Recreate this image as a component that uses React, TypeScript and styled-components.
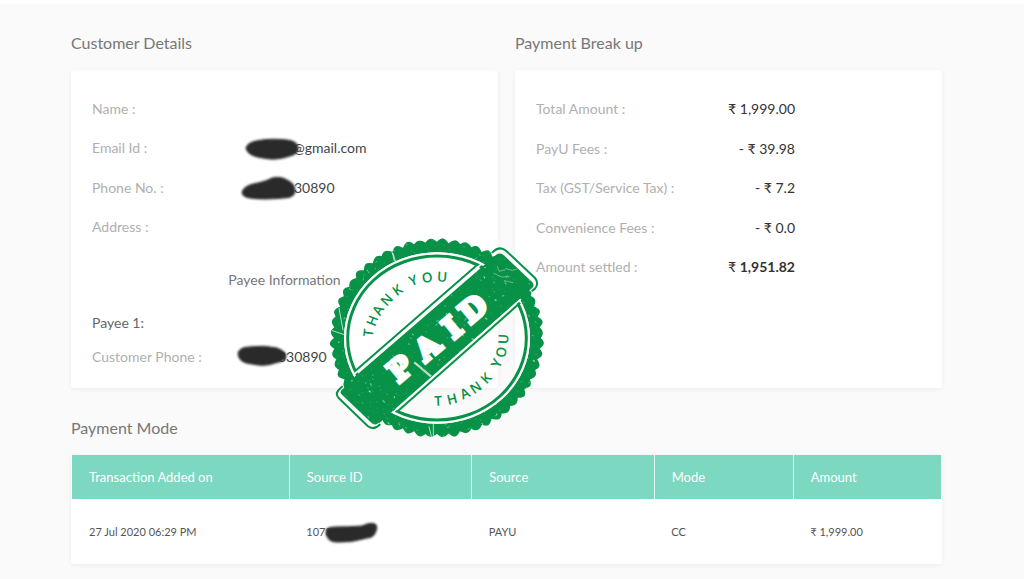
import React from "react";
import styled, { createGlobalStyle } from "styled-components";

const GlobalStyle = createGlobalStyle`
  * { box-sizing: border-box; }
  html { background: #fafafa; }
  body {
    margin: 0;
    background: #fafafa;
    font-family: Lato, "Liberation Sans", sans-serif;
    color: #444;
  }
`;

const Page = styled.main`
  border-top: 4px solid #fff;
  padding: 27px 82px 14px 71px;
`;

const Columns = styled.div`
  position: relative;
  display: grid;
  grid-template-columns: 1fr 1fr;
  gap: 17px;
`;

const Section = styled.section`
  display: flex;
  flex-direction: column;
`;

const Heading = styled.h2`
  margin: 0 0 15px;
  font-size: 16px;
  line-height: 24px;
  font-weight: 400;
  color: #777;
`;

const Card = styled.div`
  flex: 1;
  padding: 29px 21px 21px;
  background: #fff;
  border-radius: 3px;
  box-shadow: 0 1px 5px rgba(0, 0, 0, 0.06);
`;

const Details = styled.dl<{ $rows: number }>`
  display: grid;
  align-content: space-between;
  min-height: ${(p) => p.$rows * 20 + (p.$rows - 1) * 20 - 2}px;
  margin: 0;
  font-size: 14px;
  line-height: 20px;
`;

const Row = styled.div<{ $label: number }>`
  display: grid;
  grid-template-columns: ${(p) => p.$label}px 1fr;
`;

const Label = styled.dt`
  color: #b0b0b0;
`;

const Value = styled.dd`
  display: flex;
  margin: 0;
  color: #444;
`;

const Money = styled.dd<{ $bold?: boolean }>`
  width: 83px;
  margin: 0;
  text-align: right;
  white-space: nowrap;
  color: #333;
  font-weight: 400;

  b {
    font-weight: ${(p) => (p.$bold ? 700 : 400)};
  }
`;

const Subheading = styled.h3`
  margin: 33px 0 23px;
  font-size: 14px;
  line-height: 20px;
  font-weight: 400;
  text-align: center;
  color: #777;
`;

const PayeeTitle = styled.h4`
  margin: 0 0 14px;
  font-size: 14px;
  line-height: 20px;
  font-weight: 400;
  color: #666;
`;

const BlotSvg = styled.svg<{ $lead: number; $overlap: number }>`
  position: relative;
  flex: none;
  margin: -4px -${(p) => p.$overlap}px -4px -${(p) => p.$lead}px;
  z-index: 1;
`;

const ModeSection = styled.section`
  margin-top: 28px;
`;

const TableCard = styled.div`
  background: #fff;
  padding: 0 1px;
  border-radius: 3px;
  box-shadow: 0 1px 5px rgba(0, 0, 0, 0.06);
`;

const Table = styled.table`
  width: 100%;
  table-layout: fixed;
  border-collapse: collapse;
`;

const Th = styled.th<{ $width: number }>`
  width: ${(p) => p.$width}%;
  height: 44px;
  padding: 0 17px;
  background: #7cd8c0;
  color: #fff;
  font-size: 13px;
  font-weight: 400;
  text-align: left;

  & + & {
    border-left: 1px solid #e6f8f3;
  }
`;

const Td = styled.td`
  height: 65px;
  padding: 0 17px;
  font-size: 11px;
  line-height: 20px;
  color: #555;
`;

const Inline = styled.span`
  display: flex;
`;

const StampSvg = styled.svg`
  position: absolute;
  top: 199px;
  left: calc(50% - 188px);
  z-index: 2;
  pointer-events: none;
`;

const blots = {
  email: { width: 66, lead: 0, overlap: 9, d: "M10 14Q11 9 20 7Q34 4 51 6Q61 7 62 13Q63 20 54 22Q40 27 27 24Q11 22 10 14Z" },
  phone: { width: 66, lead: 0, overlap: 8, d: "M6 18Q8 11 22 9Q31 7 36 4Q45 2 51 6Q60 10 59 18Q58 24 47 24Q27 26 14 24Q6 23 6 18Z" },
  payee: { width: 62, lead: 0, overlap: 20, d: "M2 10Q4 4 13 4Q28 2 41 5Q51 9 50 14Q49 18 39 20Q29 24 16 21Q2 20 2 10Z" },
  source: { width: 60, lead: 8, overlap: 0, d: "M2 13Q3 9 11 9Q25 9 38 8Q46 4 51 6Q54 8 52 13Q50 20 43 20Q28 25 11 24Q2 23 2 13Z" },
};

function Blot({ kind }: { kind: keyof typeof blots }) {
  const b = blots[kind];
  return (
    <BlotSvg
      $lead={b.lead}
      $overlap={b.overlap}
      width={b.width}
      height="28"
      viewBox={`0 0 ${b.width} 28`}
      aria-hidden="true"
    >
      <defs>
        <filter id={`soft-${kind}`} x="-10%" y="-20%" width="120%" height="140%">
          <feGaussianBlur stdDeviation="0.9" />
        </filter>
      </defs>
      <path d={b.d} fill="#2b2b2b" stroke="#2b2b2b" filter={`url(#soft-${kind})`} />
    </BlotSvg>
  );
}

const GREEN = "#079247";
const CX = 354;
const CY = 324;

function scallop(count: number, rx: number, ry: number, depth: number) {
  const samples = count * 8;
  const points = Array.from({ length: samples }, (_, i) => {
    const angle = (i / samples) * Math.PI * 2;
    const wave = Math.abs(Math.sin((angle * count) / 2)) * 2 - 1;
    const uneven = Math.sin(angle * 23) * 1.2 + Math.sin(angle * 41 + 1);
    const d = wave * depth + uneven;
    return `${(CX + (rx + d) * Math.cos(angle)).toFixed(1)} ${(CY + (ry + d) * Math.sin(angle)).toFixed(1)}`;
  });
  return `M${points.join("L")}Z`;
}

const RING =
  scallop(56, 315, 293, 5) +
  `M${CX - 279} ${CY}a279 257 0 1 0 558 0a279 257 0 1 0 -558 0Z`;

const BANNER = "M98 448L527 78Q542 64 556 77L640 157Q648 166 639 175L215 549L184 577Q170 590 157 578L69 494Q60 486 70 476Z";

function makeSpecks(count: number, start: number) {
  let seed = start;
  const next = () => {
    seed = (seed * 16807) % 2147483647;
    return seed / 2147483647;
  };
  return Array.from({ length: count }, () => {
    const x = 30 + next() * 650;
    const y = 20 + next() * 610;
    const size = 0.8 + Math.pow(next(), 3) * 3;
    const dx = (next() - 0.5) * size * 3;
    const dy = (next() - 0.5) * size * 3;
    return { d: `M${x.toFixed(1)} ${y.toFixed(1)}l${dx.toFixed(1)} ${dy.toFixed(1)}`, size, opacity: 0.2 + next() * 0.5 };
  });
}

const specks = makeSpecks(950, 4711);
const grains = makeSpecks(900, 911);

type Glyph = { x: number; y: number; turn: number; advance: number };

function StampWord({ word, glyphs, size, cap, ...rest }: {
  word: string;
  glyphs: Glyph[];
  size: number;
  cap: number;
} & React.SVGProps<SVGTextElement>) {
  const placed = glyphs.map((g) => {
    const a = (g.turn * Math.PI) / 180;
    const half = (g.advance * size) / 2;
    const rise = (cap * size) / 2;
    return {
      x: g.x - half * Math.cos(a) - rise * Math.sin(a),
      y: g.y - half * Math.sin(a) + rise * Math.cos(a),
      turn: g.turn,
    };
  });
  return (
    <text
      x={placed.map((p) => p.x.toFixed(1)).join(" ")}
      y={placed.map((p) => p.y.toFixed(1)).join(" ")}
      rotate={placed.map((p) => p.turn).join(" ")}
      fontSize={size}
      {...rest}
    >
      {word}
    </text>
  );
}

const upper: Glyph[] = [
  { x: 148, y: 308, turn: -83, advance: 0.58 },
  { x: 160, y: 272, turn: -69, advance: 0.76 },
  { x: 177, y: 240, turn: -60, advance: 0.68 },
  { x: 203, y: 209, turn: -48, advance: 0.79 },
  { x: 235, y: 180, turn: -36, advance: 0.64 },
  { x: 261, y: 163, turn: -28, advance: 0.26 },
  { x: 283, y: 151, turn: -20, advance: 0.6 },
  { x: 325, y: 142, turn: -8, advance: 0.8 },
  { x: 370, y: 140, turn: 4, advance: 0.75 },
];

const lower: Glyph[] = [
  { x: 358, y: 513, turn: -3, advance: 0.58 },
  { x: 399, y: 507, turn: -14, advance: 0.76 },
  { x: 438, y: 490, turn: -25, advance: 0.68 },
  { x: 470, y: 472, turn: -34, advance: 0.79 },
  { x: 501, y: 445, turn: -46, advance: 0.64 },
  { x: 518, y: 420, turn: -56, advance: 0.26 },
  { x: 533, y: 400, turn: -65, advance: 0.6 },
  { x: 547, y: 366, turn: -77, advance: 0.8 },
  { x: 553, y: 327, turn: -88, advance: 0.75 },
];

const paid: Glyph[] = [
  { x: 243, y: 415, turn: -40, advance: 0.75 },
  { x: 325, y: 351, turn: -40, advance: 0.78 },
  { x: 399, y: 291, turn: -40, advance: 0.47 },
  { x: 462, y: 235, turn: -40, advance: 0.87 },
];

function Stamp() {
  return (
    <StampSvg width="240" height="215" viewBox="0 0 720 645" role="img" aria-label="Paid, thank you">
      <defs>
        <clipPath id="stamp-ink">
          <path d={RING} clipRule="evenodd" />
          <path d={BANNER} />
        </clipPath>
        <clipPath id="stamp-banner">
          <path d={BANNER} />
        </clipPath>
      </defs>
      <path d={RING} fill={GREEN} fillRule="evenodd" />
      <g fill="none">
        <ellipse cx={CX} cy={CY} rx="276" ry="254" stroke="#fff" strokeWidth="6" />
        <ellipse cx={CX} cy={CY} rx="268" ry="246" stroke={GREEN} strokeWidth="9" />
      </g>
      <path d={BANNER} fill={GREEN} />
      <g fill="none" strokeLinecap="round" strokeLinejoin="round">
        <path d="M104 434L486 103M222 547L604 209" stroke="#fff" strokeWidth="5" />
        <path d="M112 420L470 109M236 544L602 220" stroke={GREEN} strokeWidth="6" />
        <path d="M522 72Q540 54 558 66L645 148Q657 161 645 174L634 182M73 472L64 480Q54 490 64 501L148 583Q163 596 178 582" stroke="#fff" strokeWidth="5" />
        <path d="M520 67Q541 46 561 62L648 144Q661 160 648 176L640 182M69 470L59 480Q48 492 59 504L146 588Q163 602 182 584" stroke={GREEN} strokeWidth="6" />
      </g>
      <g clipPath="url(#stamp-ink)" stroke="#fff" fill="none" strokeLinecap="round">
        {specks.map((s, i) => (
          <path key={i} d={s.d} strokeWidth={s.size} opacity={s.opacity} />
        ))}
        <path d="M218 62L226 92M222 70L230 96M40 302L92 319M60 235L72 300M330 590L338 622M343 580V620M500 505L520 522M250 285L292 262" strokeWidth="3" opacity="0.7" />
        <path d="M535 110L541 124L556 120M560 116L580 121L592 118M524 130L548 141L570 140M556 152L582 158" strokeWidth="2" opacity="0.6" />
      </g>
      <path d="M286 397L336 439" stroke="#fff" strokeWidth="7" opacity="0.7" />
      <StampWord
        word="PAID"
        glyphs={paid}
        size={88}
        cap={0.729}
        fontFamily='"DejaVu Serif", serif'
        fontWeight={700}
        fill="#fff"
        stroke="#fff"
        strokeWidth={12}
      />
      <g clipPath="url(#stamp-banner)" stroke={GREEN} fill="none" strokeLinecap="round">
        {grains.map((s, i) => (
          <path key={i} d={s.d} strokeWidth={s.size} opacity={s.opacity * 0.6} />
        ))}
      </g>
      <g fill={GREEN} fontFamily='"Open Sans", "Noto Sans", sans-serif' fontWeight={600}>
        <StampWord word="THANK YOU" glyphs={upper} size={41} cap={0.714} />
        <StampWord word="THANK YOU" glyphs={lower} size={41} cap={0.714} />
      </g>
    </StampSvg>
  );
}

const breakup = [
  { label: "Total Amount :", sign: "", amount: "1,999.00" },
  { label: "PayU Fees :", sign: "- ", amount: "39.98" },
  { label: "Tax (GST/Service Tax) :", sign: "- ", amount: "7.2" },
  { label: "Convenience Fees :", sign: "- ", amount: "0.0" },
  { label: "Amount settled :", sign: "", amount: "1,951.82", bold: true },
];

const headers = [
  { title: "Transaction Added on", width: 25 },
  { title: "Source ID", width: 21 },
  { title: "Source", width: 21 },
  { title: "Mode", width: 16 },
  { title: "Amount", width: 17 },
];

export default function App() {
  return (
    <>
      <GlobalStyle />
      <Page>
        <Columns>
          <Section>
            <Heading>Customer Details</Heading>
            <Card>
              <Details $rows={4}>
                <Row $label={144}><Label>Name :</Label><Value /></Row>
                <Row $label={144}><Label>Email Id :</Label><Value><Blot kind="email" />@gmail.com</Value></Row>
                <Row $label={144}><Label>Phone No. :</Label><Value><Blot kind="phone" />30890</Value></Row>
                <Row $label={144}><Label>Address :</Label><Value /></Row>
              </Details>
              <Subheading>Payee Information</Subheading>
              <PayeeTitle>Payee 1:</PayeeTitle>
              <Details $rows={1}>
                <Row $label={144}><Label>Customer Phone :</Label><Value><Blot kind="payee" />330890</Value></Row>
              </Details>
            </Card>
          </Section>
          <Section>
            <Heading>Payment Break up</Heading>
            <Card>
              <Details $rows={5}>
                {breakup.map((item) => (
                  <Row $label={176} key={item.label}>
                    <Label>{item.label}</Label>
                    <Money $bold={item.bold}>{item.sign}₹ <b>{item.amount}</b></Money>
                  </Row>
                ))}
              </Details>
            </Card>
          </Section>
          <Stamp />
        </Columns>
        <ModeSection>
          <Heading>Payment Mode</Heading>
          <TableCard>
            <Table>
              <thead>
                <tr>
                  {headers.map((h) => (
                    <Th key={h.title} $width={h.width} scope="col">{h.title}</Th>
                  ))}
                </tr>
              </thead>
              <tbody>
                <tr>
                  <Td>27 Jul 2020 06:29 PM</Td>
                  <Td><Inline>1078<Blot kind="source" /></Inline></Td>
                  <Td>PAYU</Td>
                  <Td>CC</Td>
                  <Td>₹ 1,999.00</Td>
                </tr>
              </tbody>
            </Table>
          </TableCard>
        </ModeSection>
      </Page>
    </>
  );
}
